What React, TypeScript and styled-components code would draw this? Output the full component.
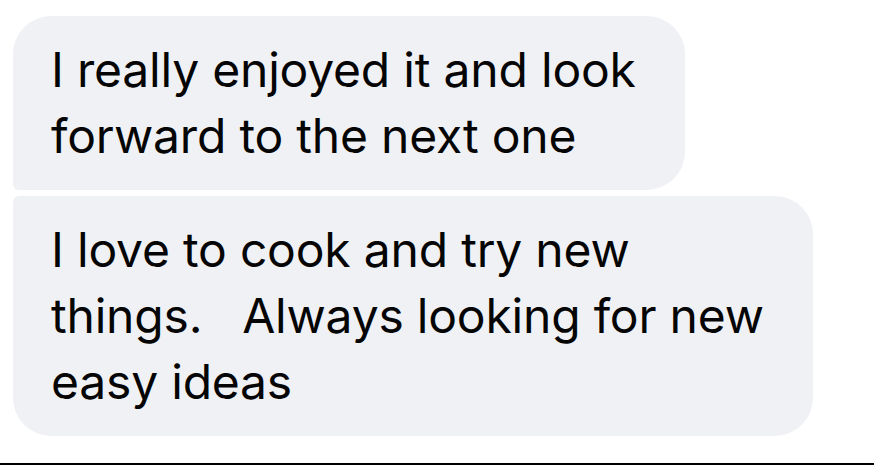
import React from "react";
import styled, { createGlobalStyle } from "styled-components";

const GlobalStyle = createGlobalStyle`
  html, body {
    margin: 0;
    padding: 0;
    background: #ffffff;
  }
  body {
    width: 874px;
    height: 465px;
    overflow: hidden;
    font-family: Inter, "Liberation Sans", sans-serif;
  }
`;

const Screen = styled.div`
  display: flex;
  flex-direction: column;
  width: 874px;
  height: 465px;
  box-sizing: border-box;
  padding-top: 16px;
`;

const Thread = styled.div`
  flex: 1;
  display: flex;
  flex-direction: column;
  align-items: flex-start;
  gap: 6px;
  padding-left: 13px;
`;

const Bubble = styled.div<{ $position: "first" | "last" }>`
  background: #f0f1f5;
  color: #050505;
  padding: 21px 49px 21px 38px;
  border-radius: ${({ $position }) =>
    $position === "first" ? "38px 38px 38px 6px" : "6px 38px 38px 38px"};
  font-size: 48px;
  line-height: 66px;
  letter-spacing: -0.2px;
`;

const Line = styled.div`
  white-space: pre;
`;

const BottomRule = styled.div`
  height: 2px;
  background: #000000;
`;

const messages: { lines: string[]; position: "first" | "last" }[] = [
  {
    position: "first",
    lines: ["I really enjoyed it and look", "forward to the next one"],
  },
  {
    position: "last",
    lines: ["I love to cook and try new", "things.   Always looking for new", "easy ideas"],
  },
];

export default function App() {
  return (
    <>
      <GlobalStyle />
      <Screen>
        <Thread>
          {messages.map((m, i) => (
            <Bubble key={i} $position={m.position}>
              {m.lines.map((l, j) => (
                <Line key={j}>{l}</Line>
              ))}
            </Bubble>
          ))}
        </Thread>
        <BottomRule />
      </Screen>
    </>
  );
}
